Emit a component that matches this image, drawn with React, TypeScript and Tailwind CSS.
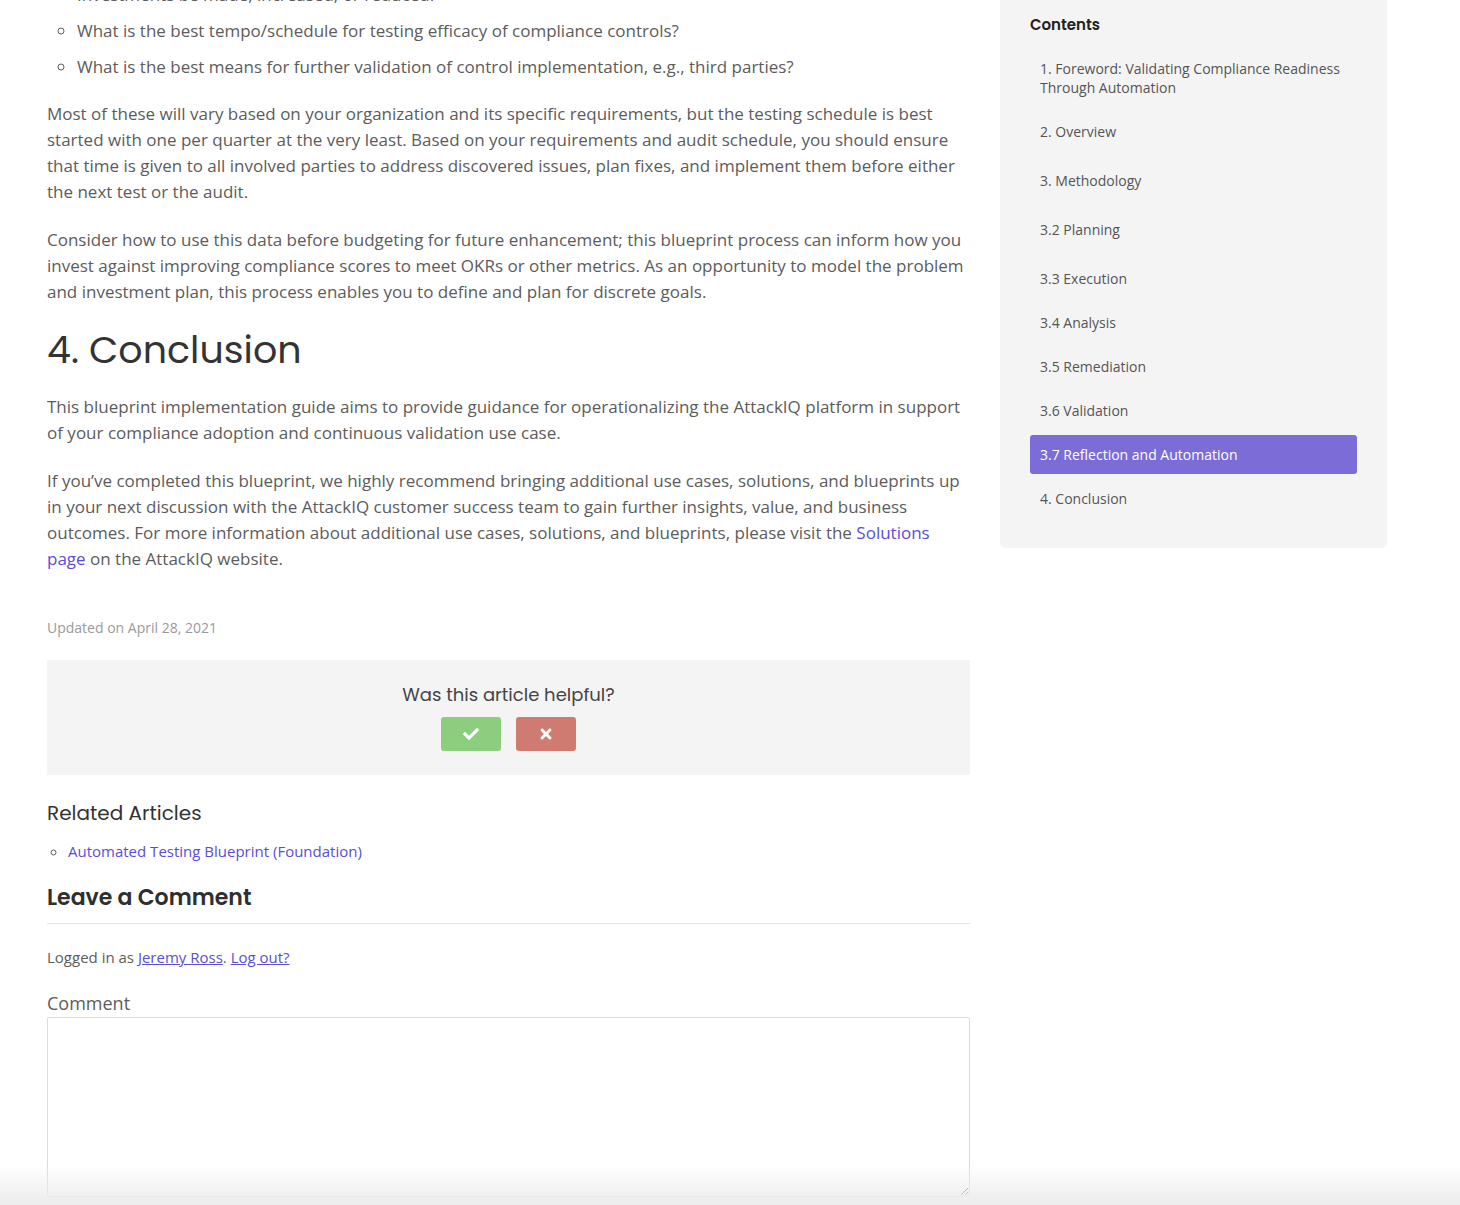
import React from "react";
import { FaCheck, FaTimes } from "react-icons/fa";

const body = { fontFamily: '"Open Sans", "Liberation Sans", sans-serif' };
const head = { fontFamily: 'Poppins, Inter, "Liberation Sans", sans-serif' };

const toc: { label: string; mt: number; active?: boolean }[] = [
  { label: "1. Foreword: Validating Compliance Readiness Through Automation", mt: 0 },
  { label: "2. Overview", mt: 5 },
  { label: "3. Methodology", mt: 10 },
  { label: "3.2 Planning", mt: 10 },
  { label: "3.3 Execution", mt: 10 },
  { label: "3.4 Analysis", mt: 5 },
  { label: "3.5 Remediation", mt: 5 },
  { label: "3.6 Validation", mt: 5 },
  { label: "3.7 Reflection and Automation", mt: 5, active: true },
  { label: "4. Conclusion", mt: 5 },
];

export default function App() {
  return (
    <div className="relative h-[1205px] w-[1460px] overflow-hidden bg-white" style={body}>
      <div className="flex items-start">
        <main className="ml-[47px] w-[923px] text-[17px] leading-[26px] text-[#5c5c5c]">
          <ul className="mt-[-18px] list-[circle] pl-[30px]">
            <li>Investments be made, increased, or reduced.</li>
            <li className="mt-[10px]">What is the best tempo/schedule for testing efficacy of compliance controls?</li>
            <li className="mt-[10px]">What is the best means for further validation of control implementation, e.g., third parties?</li>
          </ul>
          <p className="mt-[21px]">
            Most of these will vary based on your organization and its specific requirements, but the testing schedule is best
            started with one per quarter at the very least. Based on your requirements and audit schedule, you should ensure
            that time is given to all involved parties to address discovered issues, plan fixes, and implement them before either
            the next test or the audit.
          </p>
          <p className="mt-[22px]">
            Consider how to use this data before budgeting for future enhancement; this blueprint process can inform how you
            invest against improving compliance scores to meet OKRs or other metrics. As an opportunity to model the problem
            and investment plan, this process enables you to define and plan for discrete goals.
          </p>
          <h2 className="mt-[21px] text-[38px] leading-[48px] font-normal text-[#333]" style={head}>
            4. Conclusion
          </h2>
          <p className="mt-[20px]">
            This blueprint implementation guide aims to provide guidance for operationalizing the AttackIQ platform in support
            of your compliance adoption and continuous validation use case.
          </p>
          <p className="mt-[22px]">
            If you’ve completed this blueprint, we highly recommend bringing additional use cases, solutions, and blueprints up
            in your next discussion with the AttackIQ customer success team to gain further insights, value, and business
            outcomes. For more information about additional use cases, solutions, and blueprints, please visit the{" "}
            <a className="text-[#5b4dd6]" href="#">Solutions page</a> on the AttackIQ website.
          </p>
          <div className="mt-[46px] text-[14px] leading-[20px] text-[#9a9a9a]">Updated on April 28, 2021</div>

          <div className="mt-[22px] flex h-[115px] flex-col items-center bg-[#f4f4f4] pt-[22px]">
            <div className="text-[18px] leading-[26px] text-[#444]" style={head}>Was this article helpful?</div>
            <div className="mt-[9px] flex gap-[15px]">
              <button className="flex h-[34px] w-[60px] items-center justify-center rounded-[3px] bg-[#8ccd7e] text-white">
                <FaCheck className="h-[16px] w-[16px]" />
              </button>
              <button className="flex h-[34px] w-[60px] items-center justify-center rounded-[3px] bg-[#cf7b72] text-white">
                <FaTimes className="h-[16px] w-[16px]" />
              </button>
            </div>
          </div>

          <h3 className="mt-[24px] text-[20px] leading-[28px] font-normal text-[#333]" style={head}>Related Articles</h3>
          <ul className="mt-[13px] list-[circle] pl-[21px] text-[15px] leading-[22px]">
            <li className="pl-0">
              <a className="text-[#5b4dd6]" href="#">Automated Testing Blueprint (Foundation)</a>
            </li>
          </ul>

          <h3 className="mt-[21px] border-b border-[#e3e3e3] pb-[10px] text-[22px] leading-[30px] font-semibold text-[#2f2f2f]" style={head}>
            Leave a Comment
          </h3>
          <p className="mt-[22px] text-[15px] leading-[22px]">
            Logged in as <a className="text-[#5b4dd6] underline" href="#">Jeremy Ross</a>.{" "}
            <a className="text-[#5b4dd6] underline" href="#">Log out?</a>
          </p>
          <label className="mt-[22px] block text-[18px] leading-[26px]">Comment</label>
          <textarea className="mt-[1px] block h-[180px] w-full rounded-[2px] border border-[#dcdcdc] bg-white" />
        </main>

        <aside className="ml-[30px] w-[387px] rounded-b-[6px] bg-[#f4f4f4] px-[30px] pt-[14px] pb-[30px]">
          <div className="text-[15px] leading-[22px] font-semibold text-[#222]" style={head}>Contents</div>
          <ul className="mt-[13px]">
            {toc.map((t) => (
              <li
                key={t.label}
                style={{ marginTop: t.mt }}
                className={
                  t.active
                    ? "rounded-[3px] bg-[#7b6cd8] px-[10px] py-[10px] text-[14px] leading-[19px] text-white"
                    : "px-[10px] py-[10px] text-[14px] leading-[19px] text-[#555]"
                }
              >
                {t.label}
              </li>
            ))}
          </ul>
        </aside>
      </div>
      <div className="pointer-events-none absolute bottom-0 left-0 h-[40px] w-full bg-gradient-to-b from-[rgba(238,238,238,0)] to-[#ececec]" />
    </div>
  );
}
